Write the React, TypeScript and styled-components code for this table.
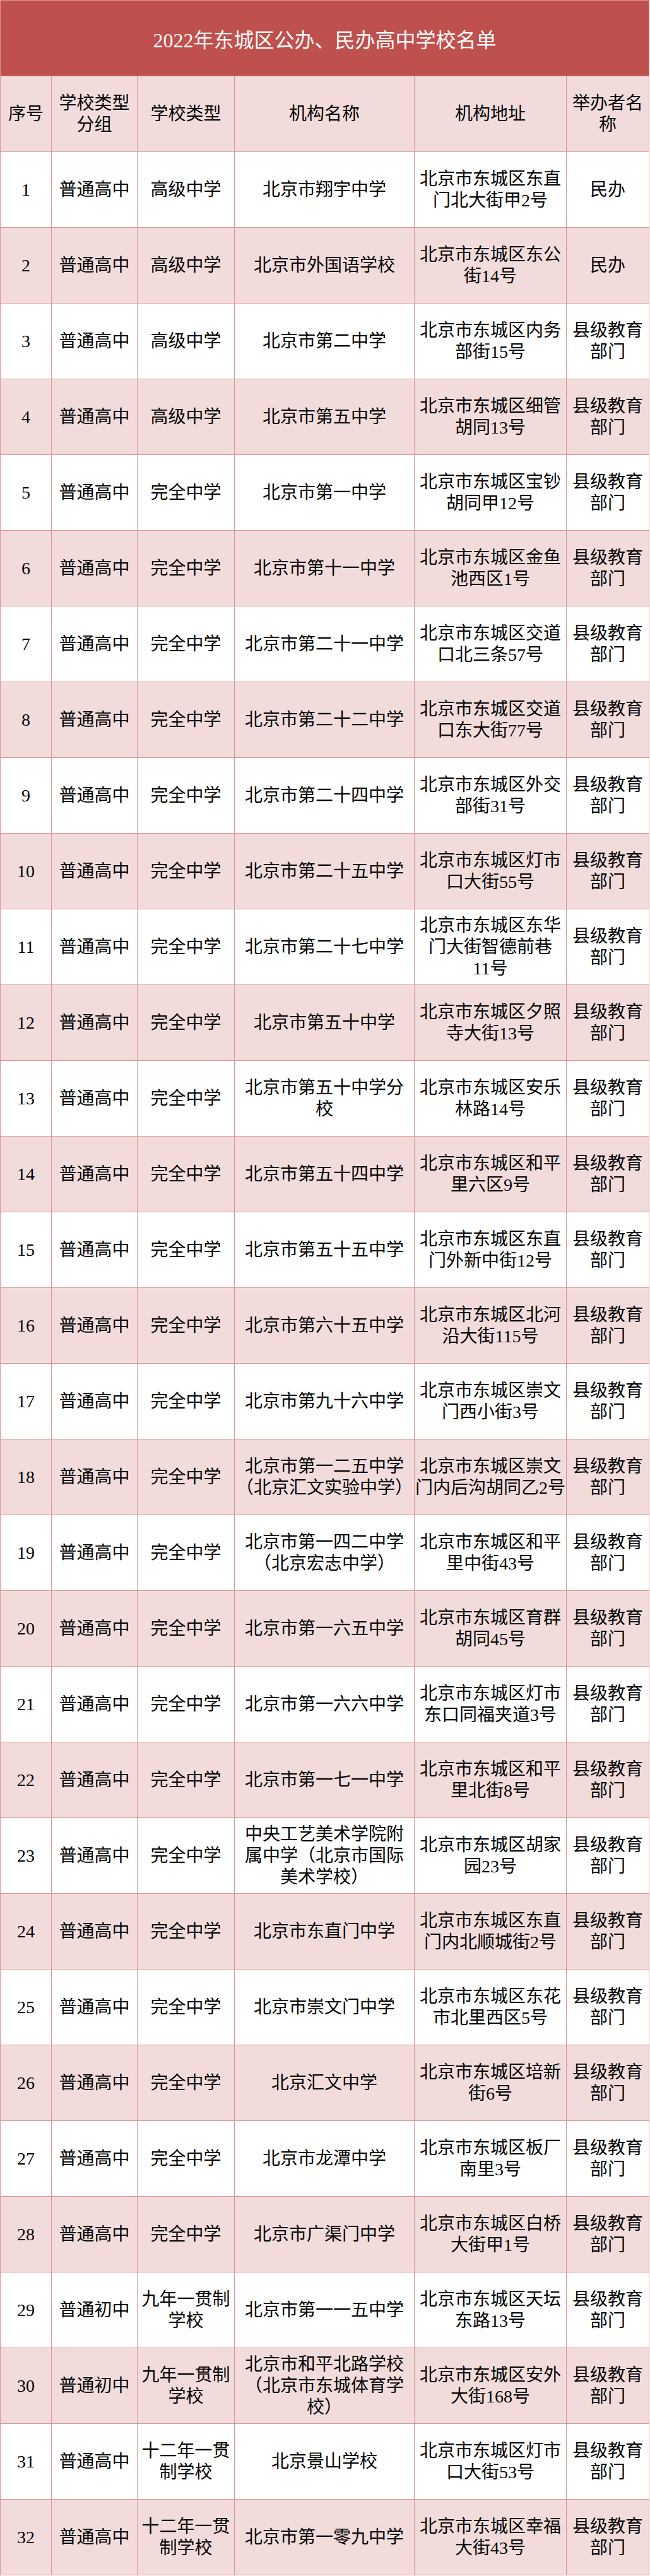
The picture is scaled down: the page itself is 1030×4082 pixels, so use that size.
import styled, { createGlobalStyle } from "styled-components";

const GlobalStyle = createGlobalStyle`
  html, body {
    margin: 0;
    padding: 0;
    background: #fff;
  }
  body {
    font-family: "Liberation Serif", "Noto Sans CJK SC", serif;
    color: #000;
  }
`;

type ShadeProps = {
  $shade: boolean;
};

const Sheet = styled.div`
  width: 1029px;
  display: grid;
  grid-template-columns: 81px 136px 154px 285px 241px 131px;
  grid-auto-rows: 120px;
  border-top: 1px solid #da9694;
  border-left: 1px solid #da9694;
  box-sizing: content-box;
`;

const Title = styled.div`
  grid-column: 1 / -1;
  background: #c0504d;
  color: #fff;
  font-size: 32px;
  display: flex;
  align-items: center;
  justify-content: center;
  border-right: 1px solid #da9694;
  border-bottom: 1px solid #da9694;
  box-sizing: border-box;
`;

const Cell = styled.div<ShadeProps>`
  background: ${(props) => (props.$shade ? "#f2dcdb" : "#fff")};
  border-right: 1px solid #da9694;
  border-bottom: 1px solid #da9694;
  box-sizing: border-box;
  display: flex;
  align-items: center;
  justify-content: center;
  text-align: center;
  white-space: pre;
  font-size: 28px;
  line-height: 34px;
  padding: 0 2px;
  overflow: hidden;
`;

const headers = [
  "序号",
  "学校类型\n分组",
  "学校类型",
  "机构名称",
  "机构地址",
  "举办者名\n称",
];

type School = {
  group: string;
  kind: string;
  name: string;
  address: string;
  owner: string;
};

const GOV = "县级教育\n部门";
const HS = "普通高中";
const FULL = "完全中学";

const schools: School[] = [
  { group: HS, kind: "高级中学", name: "北京市翔宇中学", address: "北京市东城区东直\n门北大街甲2号", owner: "民办" },
  { group: HS, kind: "高级中学", name: "北京市外国语学校", address: "北京市东城区东公\n街14号", owner: "民办" },
  { group: HS, kind: "高级中学", name: "北京市第二中学", address: "北京市东城区内务\n部街15号", owner: GOV },
  { group: HS, kind: "高级中学", name: "北京市第五中学", address: "北京市东城区细管\n胡同13号", owner: GOV },
  { group: HS, kind: FULL, name: "北京市第一中学", address: "北京市东城区宝钞\n胡同甲12号", owner: GOV },
  { group: HS, kind: FULL, name: "北京市第十一中学", address: "北京市东城区金鱼\n池西区1号", owner: GOV },
  { group: HS, kind: FULL, name: "北京市第二十一中学", address: "北京市东城区交道\n口北三条57号", owner: GOV },
  { group: HS, kind: FULL, name: "北京市第二十二中学", address: "北京市东城区交道\n口东大街77号", owner: GOV },
  { group: HS, kind: FULL, name: "北京市第二十四中学", address: "北京市东城区外交\n部街31号", owner: GOV },
  { group: HS, kind: FULL, name: "北京市第二十五中学", address: "北京市东城区灯市\n口大街55号", owner: GOV },
  { group: HS, kind: FULL, name: "北京市第二十七中学", address: "北京市东城区东华\n门大街智德前巷\n11号", owner: GOV },
  { group: HS, kind: FULL, name: "北京市第五十中学", address: "北京市东城区夕照\n寺大街13号", owner: GOV },
  { group: HS, kind: FULL, name: "北京市第五十中学分\n校", address: "北京市东城区安乐\n林路14号", owner: GOV },
  { group: HS, kind: FULL, name: "北京市第五十四中学", address: "北京市东城区和平\n里六区9号", owner: GOV },
  { group: HS, kind: FULL, name: "北京市第五十五中学", address: "北京市东城区东直\n门外新中街12号", owner: GOV },
  { group: HS, kind: FULL, name: "北京市第六十五中学", address: "北京市东城区北河\n沿大街115号", owner: GOV },
  { group: HS, kind: FULL, name: "北京市第九十六中学", address: "北京市东城区崇文\n门西小街3号", owner: GOV },
  { group: HS, kind: FULL, name: "北京市第一二五中学\n（北京汇文实验中学）", address: "北京市东城区崇文\n门内后沟胡同乙2号", owner: GOV },
  { group: HS, kind: FULL, name: "北京市第一四二中学\n（北京宏志中学）", address: "北京市东城区和平\n里中街43号", owner: GOV },
  { group: HS, kind: FULL, name: "北京市第一六五中学", address: "北京市东城区育群\n胡同45号", owner: GOV },
  { group: HS, kind: FULL, name: "北京市第一六六中学", address: "北京市东城区灯市\n东口同福夹道3号", owner: GOV },
  { group: HS, kind: FULL, name: "北京市第一七一中学", address: "北京市东城区和平\n里北街8号", owner: GOV },
  { group: HS, kind: FULL, name: "中央工艺美术学院附\n属中学（北京市国际\n美术学校）", address: "北京市东城区胡家\n园23号", owner: GOV },
  { group: HS, kind: FULL, name: "北京市东直门中学", address: "北京市东城区东直\n门内北顺城街2号", owner: GOV },
  { group: HS, kind: FULL, name: "北京市崇文门中学", address: "北京市东城区东花\n市北里西区5号", owner: GOV },
  { group: HS, kind: FULL, name: "北京汇文中学", address: "北京市东城区培新\n街6号", owner: GOV },
  { group: HS, kind: FULL, name: "北京市龙潭中学", address: "北京市东城区板厂\n南里3号", owner: GOV },
  { group: HS, kind: FULL, name: "北京市广渠门中学", address: "北京市东城区白桥\n大街甲1号", owner: GOV },
  { group: "普通初中", kind: "九年一贯制\n学校", name: "北京市第一一五中学", address: "北京市东城区天坛\n东路13号", owner: GOV },
  { group: "普通初中", kind: "九年一贯制\n学校", name: "北京市和平北路学校\n（北京市东城体育学\n校）", address: "北京市东城区安外\n大街168号", owner: GOV },
  { group: HS, kind: "十二年一贯\n制学校", name: "北京景山学校", address: "北京市东城区灯市\n口大街53号", owner: GOV },
  { group: HS, kind: "十二年一贯\n制学校", name: "北京市第一零九中学", address: "北京市东城区幸福\n大街43号", owner: GOV },
];

export default function App() {
  return (
    <>
      <GlobalStyle />
      <Sheet>
        <Title>2022年东城区公办、民办高中学校名单</Title>
        {headers.map((h) => (
          <Cell key={h} $shade={true}>
            {h}
          </Cell>
        ))}
        {schools.map((s, i) => {
          const shade = i % 2 === 1;
          return [
            String(i + 1),
            s.group,
            s.kind,
            s.name,
            s.address,
            s.owner,
          ].map((text, j) => (
            <Cell key={`${i}-${j}`} $shade={shade}>
              {text}
            </Cell>
          ));
        })}
      </Sheet>
    </>
  );
}
